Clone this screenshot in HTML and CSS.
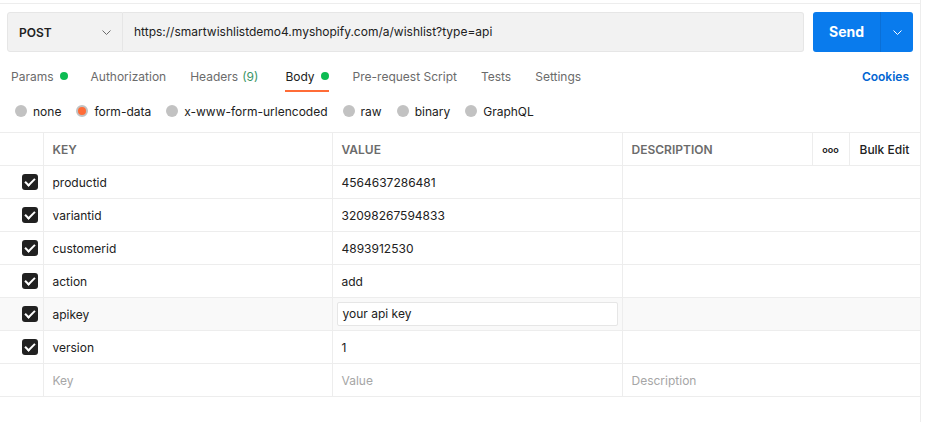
FILE: index.html
```html
<!DOCTYPE html>
<html>
<head>
    <meta charset="UTF-8">
    <title>POST wishlist</title>
    <link rel="stylesheet" href="styles.css">
</head>
<body>
    <div class="page">
        <div class="topline"></div>
        <!-- request bar -->
        <div class="request">
            <div class="method">
                <span>POST</span>
                <svg width="9" height="5" viewBox="0 0 9 5"><path d="M0.5 0.5l4 4 4-4" fill="none" stroke="#6b6b6b" stroke-width="1"/></svg>
            </div>
            <div class="url">https://smartwishlistdemo4.myshopify.com/a/wishlist?type=api</div>
            <div class="send">
                <span class="send-label">Send</span>
                <span class="send-more">
                    <svg width="9" height="5" viewBox="0 0 9 5"><path d="M0.5 0.5l4 4 4-4" fill="none" stroke="#ffffff" stroke-width="1"/></svg>
                </span>
            </div>
        </div>
        <!-- tabs -->
        <div class="tabs">
            <span class="tab">Params<i class="dot"></i></span>
            <span class="tab">Authorization</span>
            <span class="tab headers">Headers<span class="count">(9)</span></span>
            <span class="tab active">Body<i class="dot"></i></span>
            <span class="tab">Pre-request Script</span>
            <span class="tab">Tests</span>
            <span class="tab">Settings</span>
            <span class="cookies">Cookies</span>
        </div>
        <!-- body types -->
        <div class="types">
            <span class="type"><i class="radio"></i>none</span>
            <span class="type"><i class="radio on"></i>form-data</span>
            <span class="type"><i class="radio"></i>x-www-form-urlencoded</span>
            <span class="type"><i class="radio"></i>raw</span>
            <span class="type"><i class="radio"></i>binary</span>
            <span class="type"><i class="radio"></i>GraphQL</span>
        </div>
        <table class="params">
            <colgroup>
                <col class="c-check">
                <col class="c-key">
                <col class="c-value">
                <col class="c-desc">
                <col class="c-more">
                <col class="c-bulk">
            </colgroup>
            <thead>
                <tr>
                    <th></th>
                    <th>KEY</th>
                    <th>VALUE</th>
                    <th>DESCRIPTION</th>
                    <th class="more">ooo</th>
                    <th class="bulk">Bulk Edit</th>
                </tr>
            </thead>
            <tbody>
                <tr>
                    <td class="check"><i class="box"></i></td>
                    <td>productid</td>
                    <td>4564637286481</td>
                    <td colspan="3"></td>
                </tr>
                <tr>
                    <td class="check"><i class="box"></i></td>
                    <td>variantid</td>
                    <td>32098267594833</td>
                    <td colspan="3"></td>
                </tr>
                <tr>
                    <td class="check"><i class="box"></i></td>
                    <td>customerid</td>
                    <td>4893912530</td>
                    <td colspan="3"></td>
                </tr>
                <tr>
                    <td class="check"><i class="box"></i></td>
                    <td>action</td>
                    <td>add</td>
                    <td colspan="3"></td>
                </tr>
                <tr class="hover">
                    <td class="check"><i class="box"></i></td>
                    <td>apikey</td>
                    <td class="editing"><div class="field">your api key</div></td>
                    <td colspan="3"></td>
                </tr>
                <tr>
                    <td class="check"><i class="box"></i></td>
                    <td>version</td>
                    <td>1</td>
                    <td colspan="3"></td>
                </tr>
                <tr class="empty">
                    <td></td>
                    <td>Key</td>
                    <td>Value</td>
                    <td colspan="3">Description</td>
                </tr>
            </tbody>
        </table>
    </div>
</body>
</html>
```

FILE: styles.css
```css
body {
    margin: 0;
    background: #ffffff;
    font-family: Inter, "Open Sans", sans-serif;
    font-size: 12px;
    color: #212121;
}
.page {
    width: 920px;
    min-height: 422px;
    border-right: 1px solid #ededed;
}
.topline {
    height: 3px;
    border-bottom: 1px solid #ededed;
}
.request {
    display: flex;
    padding: 8px 7px 0 7px;
}
.method {
    display: flex;
    align-items: center;
    justify-content: space-between;
    width: 116px;
    height: 40px;
    padding: 0 11px;
    box-sizing: border-box;
    background: #f2f2f2;
    border: 1px solid #e6e6e6;
    border-radius: 3px 0 0 3px;
    font-weight: 600;
    font-size: 12px;
}
.url {
    flex: 1;
    height: 40px;
    line-height: 38px;
    padding-left: 11px;
    box-sizing: border-box;
    background: #f2f2f2;
    border: 1px solid #e6e6e6;
    border-left: none;
    border-radius: 0 3px 3px 0;
    font-size: 12px;
}
.send {
    display: flex;
    width: 100px;
    height: 40px;
    margin-left: 9px;
    background: #097bed;
    border-radius: 3px;
    color: #ffffff;
}
.send-label {
    width: 67px;
    line-height: 40px;
    text-align: center;
    font-weight: 700;
    font-size: 14px;
    border-right: 1px solid #0a6fd6;
}
.send-more {
    flex: 1;
    display: flex;
    align-items: center;
    justify-content: center;
}
.tabs {
    display: flex;
    align-items: center;
    height: 32px;
    margin-top: 8px;
    padding: 0 11px;
}
.tab {
    display: flex;
    align-items: center;
    height: 100%;
    margin-right: 24px;
    color: #6b6b6b;
    font-size: 12px;
    box-sizing: border-box;
    padding-top: 2px;
    border-bottom: 2px solid transparent;
}
.tab:first-child {
    margin-right: 23px;
}
.tab.headers {
    margin-right: 27px;
}
.tab.active {
    color: #212121;
    border-bottom-color: #ff6c37;
}
.count {
    margin-left: 4px;
    color: #3a9566;
}
.dot {
    width: 8px;
    height: 8px;
    margin-left: 6px;
    border-radius: 50%;
    background: #0cbb52;
}
.cookies {
    margin-left: auto;
    color: #0265d2;
    font-size: 12px;
    font-weight: 600;
}
.types {
    display: flex;
    align-items: center;
    height: 38px;
    padding: 0 15px;
}
.type {
    display: flex;
    align-items: center;
    margin-right: 15px;
    font-size: 12px;
    color: #212121;
}
.radio {
    width: 12px;
    height: 12px;
    margin-right: 6px;
    border-radius: 50%;
    background: #c2c2c2;
    box-sizing: border-box;
}
.radio.on {
    background: #ff6c37;
    border: 2.5px solid #c2c2c2;
}
.params {
    margin-top: 2px;
    width: 920px;
    border-collapse: collapse;
    table-layout: fixed;
    font-size: 12px;
}
.c-check { width: 43px; }
.c-key { width: 289px; }
.c-value { width: 290px; }
.c-desc { width: 190px; }
.c-more { width: 37px; }
.c-bulk { width: 71px; }
.params th,
.params td {
    height: 32px;
    padding: 0 0 0 9px;
    border: 1px solid #ededed;
    text-align: left;
    white-space: nowrap;
}
.params tr > :first-child {
    border-left: none;
}
.params tr > :last-child {
    border-right: none;
}
.params th {
    font-weight: 600;
    color: #6b6b6b;
}
.params th.more {
    padding: 0;
    text-align: center;
    font-size: 9px;
    color: #212121;
}
.params th.bulk {
    padding-left: 10px;
    color: #212121;
    font-weight: 500;
}
.params td.check {
    padding: 0 0 0 22px;
}
.box {
    display: block;
    position: relative;
    width: 16px;
    height: 16px;
    border-radius: 3px;
    background: #212121;
}
.box::after {
    content: "";
    position: absolute;
    left: 5px;
    top: 2px;
    width: 4px;
    height: 8px;
    border: solid #ffffff;
    border-width: 0 2px 2px 0;
    transform: rotate(45deg);
}
.params tr.hover td {
    background: #f9f9f9;
}
.params td.editing {
    padding: 0 4px;
}
.field {
    height: 22px;
    line-height: 22px;
    padding-left: 5px;
    background: #ffffff;
    border: 1px solid #e6e6e6;
    border-radius: 2px;
}
.params tr.empty td {
    color: #a6a6a6;
}
```
